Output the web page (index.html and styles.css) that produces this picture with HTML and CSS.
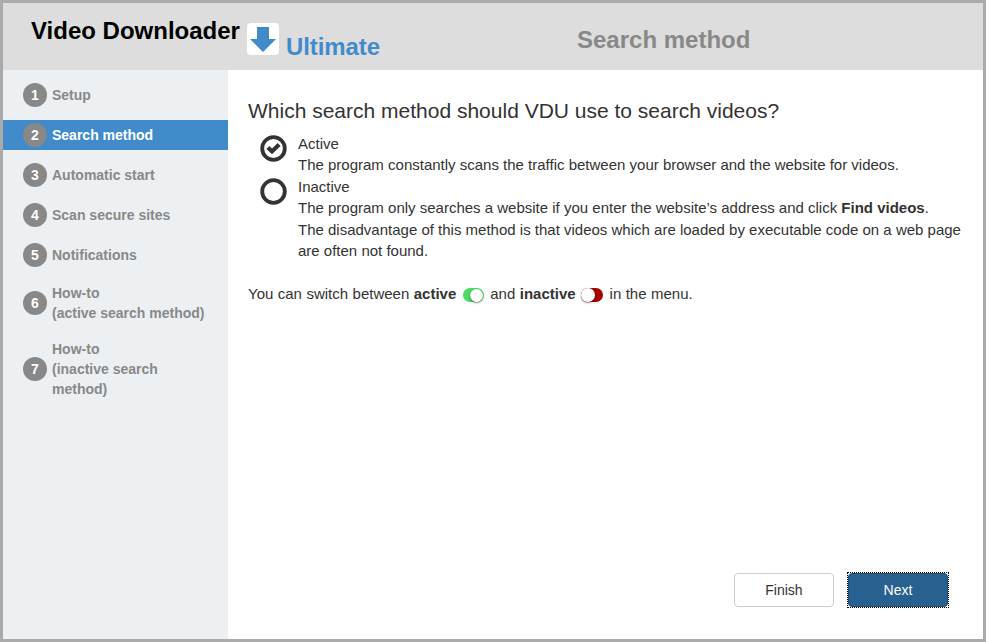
FILE: index.html
```html
<!DOCTYPE html>
<html lang="en">

<head>
  <meta charset="UTF-8" />
  <meta name="viewport" content="width=device-width, initial-scale=1.0" />
  <title>Video Downloader Ultimate</title>
  <link rel="stylesheet" href="styles.css">
</head>

<body>

  <header class="header">
    <div class="brand">
      <span class="brand-name">Video Downloader</span>
      <svg class="logo" width="32" height="32" viewBox="0 0 32 32">
        <rect width="32" height="32" rx="4" fill="#fff" />
        <path d="M10 4h12v12h7L16 29 3 16h7z" fill="#428bca" />
      </svg>
      <span class="brand-edition">Ultimate</span>
    </div>
    <h1 class="page-title">Search method</h1>
  </header>

  <div class="wrapper">
    <nav class="sidebar">
      <ul class="steps">
        <li class="step"><span class="num">1</span><span class="label">Setup</span></li>
        <li class="step active"><span class="num">2</span><span class="label">Search method</span></li>
        <li class="step"><span class="num">3</span><span class="label">Automatic start</span></li>
        <li class="step"><span class="num">4</span><span class="label">Scan secure sites</span></li>
        <li class="step"><span class="num">5</span><span class="label">Notifications</span></li>
        <li class="step"><span class="num">6</span><span class="label">How-to<br>(active search method)</span></li>
        <li class="step"><span class="num">7</span><span class="label">How-to<br>(inactive search<br>method)</span></li>
      </ul>
    </nav>

    <main class="content">
      <h2 class="question">Which search method should VDU use to search videos?</h2>

      <div class="option">
        <svg class="radio" width="27" height="27" viewBox="0 0 27 27">
          <circle cx="13.5" cy="13.5" r="11.3" fill="none" stroke="#333" stroke-width="3.8" />
          <path d="M7.9 12.4l4.1 4 7.1-7" fill="none" stroke="#333" stroke-width="4.2" />
        </svg>
        <div class="option-text">
          Active<br>
          The program constantly scans the traffic between your browser and the website for videos.
        </div>
      </div>

      <div class="option">
        <svg class="radio" width="27" height="27" viewBox="0 0 27 27">
          <circle cx="13.5" cy="13.5" r="11.3" fill="none" stroke="#333" stroke-width="3.8" />
        </svg>
        <div class="option-text">
          Inactive<br>
          The program only searches a website if you enter the website’s address and click <b>Find videos</b>.<br>
          The disadvantage of this method is that videos which are loaded by executable code on a web page<br>
          are often not found.
        </div>
      </div>

      <p class="hint">You can switch between <b>active</b>
        <span class="switch on"></span> and <b>inactive</b>
        <span class="switch off"></span> in the menu.</p>

      <div class="buttons">
        <button class="btn">Finish</button>
        <button class="btn btn-primary">Next</button>
      </div>
    </main>
  </div>

</body>

</html>
```
FILE: styles.css
```css
* {
  box-sizing: border-box;
}

body {
  display: flex;
  flex-direction: column;
  height: 642px;
  margin: 0;
  border: 3px solid #aaa;
  background: #fff;
  color: #333;
  font-family: "Liberation Sans", Arial, sans-serif;
  font-size: 15px;
  line-height: 21.4px;
}

.header {
  display: flex;
  flex: none;
  height: 67px;
  background: #ddd;
  font-size: 24px;
  font-weight: bold;
}

.brand {
  display: flex;
  align-items: flex-start;
  width: 574px;
  padding-left: 28px;
}

.brand-name {
  width: 209px;
  padding-top: 17px;
  color: #000;
  white-space: nowrap;
}

.logo {
  margin: 20px 7px 0 7px;
}

.brand-edition {
  padding-top: 33px;
  color: #428bca;
  letter-spacing: -0.1px;
}

.page-title {
  margin: 0;
  padding-top: 26px;
  color: #888;
  font-size: 24px;
  line-height: 21.4px;
}

.wrapper {
  display: flex;
  flex: 1;
}

.sidebar {
  width: 225px;
  padding-top: 10px;
  background: #ecf0f3;
}

.steps {
  margin: 0;
  padding: 0;
  list-style: none;
}

.step {
  display: flex;
  align-items: center;
  margin-bottom: 10px;
  padding: 3px 20px;
  color: #888;
  font-size: 14px;
  font-weight: bold;
  line-height: 20px;
}

.num {
  flex: none;
  width: 24px;
  height: 24px;
  margin-right: 5px;
  border-radius: 50%;
  background: #888;
  color: #fff;
  line-height: 24px;
  text-align: center;
}

.step.active {
  background: #428bca;
  color: #fff;
}

.content {
  display: flex;
  flex: 1;
  flex-direction: column;
  padding: 29px 20px 32px;
}

.question {
  margin: 0 0 10px;
  font-size: 21px;
  font-weight: normal;
  line-height: 24px;
}

.option {
  display: flex;
}

.radio {
  flex: none;
  margin: 2px 11px 0 12px;
}

.option-text {
  white-space: nowrap;
}

.hint {
  margin: 22px 0 0;
  word-spacing: 0.3px;
}

.switch {
  display: inline-block;
  position: relative;
  width: 21px;
  height: 14px;
  margin: 0 2px;
  border-radius: 7px;
  vertical-align: -3px;
}

.switch::after {
  content: "";
  position: absolute;
  top: 0;
  width: 14px;
  height: 14px;
  border-radius: 50%;
  background: #fff;
  box-shadow: 0 1px 2px rgba(0, 0, 0, 0.5);
}

.switch.on {
  background: #4cd964;
}

.switch.on::after {
  top: 0.5px;
  right: 0.5px;
  width: 13px;
  height: 13px;
}

.switch.off {
  width: 22px;
  margin-left: 1px;
  background: #a00;
}

.switch.off::after {
  left: 0;
}

.buttons {
  display: flex;
  justify-content: flex-end;
  gap: 14px;
  margin-top: auto;
  padding-right: 15px;
}

.btn {
  width: 100px;
  height: 34px;
  padding: 0;
  border: 1px solid #ccc;
  border-radius: 4px;
  background: #fff;
  color: #333;
  font-family: inherit;
  font-size: 14px;
}

.btn-primary {
  position: relative;
  border-color: #204d74;
  background: #286090;
  color: #fff;
}

/* square focus ring round the rounded button */
.btn-primary::after {
  content: "";
  position: absolute;
  inset: -2px;
  border: 1px dotted #000;
}
```
